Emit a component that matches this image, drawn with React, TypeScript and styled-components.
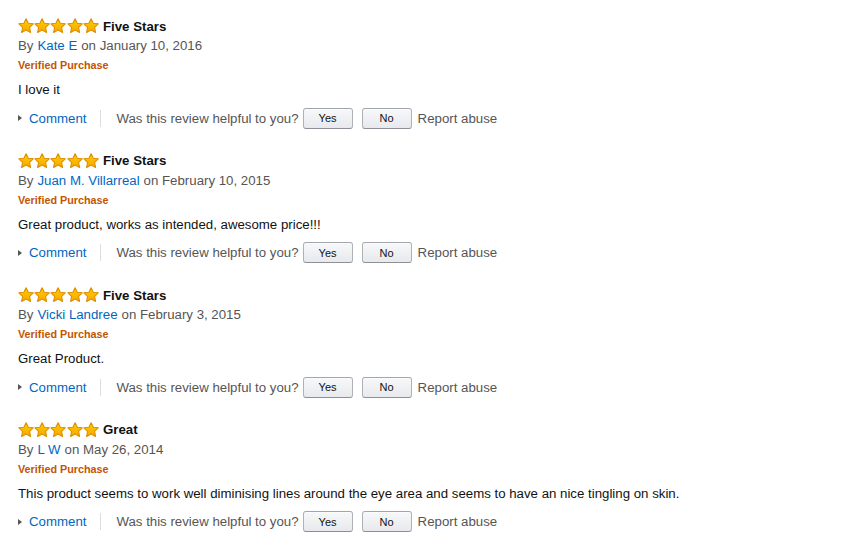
import styled, { createGlobalStyle } from 'styled-components';

const GlobalStyle = createGlobalStyle`
  body {
    margin: 0;
    background: #fff;
    font-family: "Liberation Sans", Arial, sans-serif;
    font-size: 13.25px;
    color: #111;
  }
`;

const reviews = [
  {
    title: 'Five Stars',
    author: 'Kate E',
    date: 'January 10, 2016',
    body: 'I love it',
  },
  {
    title: 'Five Stars',
    author: 'Juan M. Villarreal',
    date: 'February 10, 2015',
    body: 'Great product, works as intended, awesome price!!!',
  },
  {
    title: 'Five Stars',
    author: 'Vicki Landree',
    date: 'February 3, 2015',
    body: 'Great Product.',
  },
  {
    title: 'Great',
    author: 'L W',
    date: 'May 26, 2014',
    body: 'This product seems to work well diminising lines around the eye area and seems to have an nice tingling on skin.',
  },
];

const List = styled.div`
  padding: 17px 18px 0 18px;
  display: flex;
  flex-direction: column;
  gap: 22.5px;
`;

const Review = styled.div`
  display: flex;
  flex-direction: column;
`;

const TitleRow = styled.div`
  display: flex;
  align-items: center;
  gap: 4px;
  height: 18px;
`;

const Stars = styled.div`
  display: flex;
`;

const Title = styled.span`
  font-weight: bold;
  color: #111;
`;

const Byline = styled.div`
  margin-top: 1px;
  height: 20px;
  line-height: 20px;
  color: #555;
`;

const Author = styled.a`
  color: #0066c0;
  text-decoration: none;
  margin: 0 4px;
`;

const Verified = styled.div`
  margin-top: 1px;
  font-size: 10.8px;
  font-weight: bold;
  color: #c45500;
  height: 16px;
  line-height: 16px;
`;

const Body = styled.p`
  margin: 7px 0 0 0;
  line-height: 20px;
  color: #111;
`;

const Actions = styled.div`
  display: flex;
  align-items: center;
  margin-top: 7px;
  height: 22px;
  color: #555;
`;

const CommentLink = styled.a`
  display: flex;
  align-items: center;
  color: #0066c0;
  text-decoration: none;
  padding-right: 14px;
  border-right: 1px solid #ddd;
  height: 17px;
  &::before {
    content: '';
    border-left: 4px solid #555;
    border-top: 3.5px solid transparent;
    border-bottom: 3.5px solid transparent;
    margin-right: 7px;
  }
`;

const Helpful = styled.span`
  margin-left: 15px;
  margin-right: 4px;
`;

const VoteButton = styled.button`
  width: 50px;
  height: 21px;
  padding: 0;
  margin-right: 9px;
  font-family: inherit;
  font-size: 11px;
  color: #111;
  border: 1px solid #adb1b8;
  border-top-color: #a2a6ac;
  border-bottom-color: #8d9096;
  border-radius: 3px;
  background: linear-gradient(to bottom, #f7f8fa, #e7e9ec);
  box-shadow: 0 1px 0 rgba(255, 255, 255, 0.6) inset;
`;

const Report = styled.span`
  margin-left: -3px;
  color: #555;
`;

const Star = () => (
  <svg width="16.2" height="16" viewBox="0 0 16 16">
    <defs>
      <linearGradient id="sg" x1="0" y1="0" x2="0" y2="1">
        <stop offset="0" stopColor="#ffd000" />
        <stop offset="1" stopColor="#f7a600" />
      </linearGradient>
    </defs>
    <path
      d="M8 0.7 L10.2 5.2 L15.2 5.8 L11.5 9.3 L12.5 14.5 L8 12 L3.5 14.5 L4.5 9.3 L0.8 5.8 L5.8 5.2 Z"
      fill="url(#sg)"
      stroke="#de8f00"
      strokeWidth="1.1"
      strokeLinejoin="round"
    />
  </svg>
);

export default function App() {
  return (
    <>
      <GlobalStyle />
      <List>
        {reviews.map((r, i) => (
          <Review key={i}>
            <TitleRow>
              <Stars>
                {[0, 1, 2, 3, 4].map((s) => (
                  <Star key={s} />
                ))}
              </Stars>
              <Title>{r.title}</Title>
            </TitleRow>
            <Byline>
              By<Author href="#">{r.author}</Author>on {r.date}
            </Byline>
            <Verified>Verified Purchase</Verified>
            <Body>{r.body}</Body>
            <Actions>
              <CommentLink href="#">Comment</CommentLink>
              <Helpful>Was this review helpful to you?</Helpful>
              <VoteButton>Yes</VoteButton>
              <VoteButton>No</VoteButton>
              <Report>Report abuse</Report>
            </Actions>
          </Review>
        ))}
      </List>
    </>
  );
}
